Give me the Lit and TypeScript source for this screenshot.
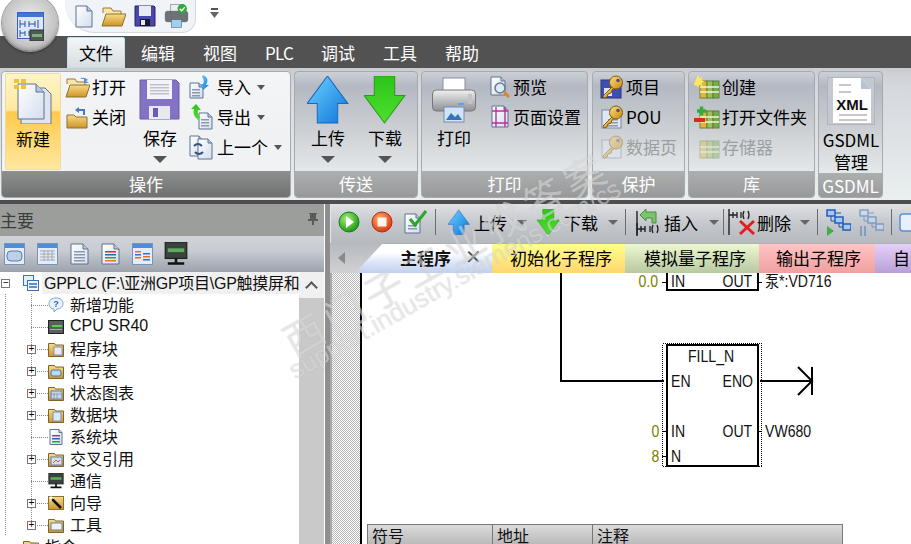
import { LitElement, html, svg, css, nothing } from 'lit';
import { customElement, property } from 'lit/decorators.js';

const CJK = css`"Noto Sans CJK SC", "Liberation Sans", sans-serif`;

const defs = svg`<defs>
  <linearGradient id="blue" x1="0" y1="0" x2="1" y2="1"><stop offset="0" stop-color="#6fd4ff"/><stop offset="1" stop-color="#0b74dc"/></linearGradient>
  <linearGradient id="green" x1="0" y1="0" x2="0" y2="1"><stop offset="0" stop-color="#2cc41c"/><stop offset="1" stop-color="#4fe02c"/></linearGradient>
  <linearGradient id="folder" x1="0" y1="0" x2="0" y2="1"><stop offset="0" stop-color="#f8dc88"/><stop offset="1" stop-color="#cc9428"/></linearGradient>
  <linearGradient id="page" x1="0" y1="0" x2="1" y2="1"><stop offset="0" stop-color="#fff"/><stop offset="1" stop-color="#d4deee"/></linearGradient>
  <linearGradient id="steel" x1="0" y1="0" x2="0" y2="1"><stop offset="0" stop-color="#f0f0f0"/><stop offset="1" stop-color="#8e9094"/></linearGradient>
  <linearGradient id="key" x1="0" y1="0" x2="1" y2="1"><stop offset="0" stop-color="#ffe27a"/><stop offset="1" stop-color="#c8860e"/></linearGradient>
  <radialGradient id="play" cx=".4" cy=".35" r=".7"><stop offset="0" stop-color="#a8f078"/><stop offset="1" stop-color="#14930f"/></radialGradient>
  <radialGradient id="stop" cx=".4" cy=".35" r=".7"><stop offset="0" stop-color="#ffb070"/><stop offset="1" stop-color="#d83208"/></radialGradient>
</defs>`;

const sheet = (x: number, y: number, w: number, h: number, fold = 5) =>
  svg`<path d="M${x} ${y}h${w - fold}l${fold} ${fold}v${h - fold}h${-w}z" fill="url(#page)" stroke="#5f7390"/>
      <path d="M${x + w - fold} ${y}v${fold}h${fold}" fill="#b8c8de" stroke="#5f7390"/>`;

const lines = (x: number, y: number, w: number, n: number, colors = ['#8a98ac']) =>
  Array.from({ length: n }, (_, i) =>
    svg`<rect x=${x} y=${y + i * 3} width=${w} height="1.5" fill=${colors[i % colors.length]}/>`);

const folderShape = svg`<path d="M.5 2.500h6l1 1.500h8v11.500H.5z" fill="url(#folder)" stroke="#7d6428"/>`;
const folderWith = (inner: unknown) => svg`${folderShape}${inner}`;
const folderOpen = svg`<path d="M2 8V3h8l2 3h8v3" fill="#f8e6a8" stroke="#9a7c30"/><path d="M1 21 5 9h20l-4 12z" fill="url(#folder)" stroke="#8d7030"/>`;
const keyShape = svg`<path d="M13 11 3 21l1 2 3-1 1-3 3-1 1-3 3-2z" fill="url(#key)" stroke="#7d5a10"/>
  <circle cx="16" cy="7.5" r="6.5" fill="url(#key)" stroke="#7d5a10"/><circle cx="18" cy="5.5" r="1.8" fill="#5b4a8a"/>`;
const books = svg`<rect x="6" y="6" width="7" height="17" fill="#d8b840" stroke="#8a7a28"/><rect x="13" y="6" width="6" height="17" fill="#98c060" stroke="#5f8030"/><rect x="19" y="6" width="6" height="17" fill="#78a850" stroke="#5f8030"/>
  <path d="M6 12h19M6 17h19" stroke="#f4f4d0" stroke-width="1.5"/>`;
const bigUp = svg`<path d="M20 0 40 27H30v19H10V27H0z" fill="url(#blue)" stroke="#1668c0"/>`;
const bigDown = svg`<path d="M10 0h20v19h10L20 46 0 19h10z" fill="url(#green)" stroke="#2a9a18"/>`;
const ladderGlyph = svg`<path d="M1 15v12M1 21h4M5 18v6M9 18v6M5 21h4" stroke="#222" stroke-width="1.4" fill="none"/>`;
const netNodes = (c: string, e: string) => svg`
  <rect x="2" y="1" width="8" height="6" fill=${c} stroke=${e} stroke-width="1.4"/><rect x="10" y="8" width="8" height="6" fill=${c} stroke=${e} stroke-width="1.4"/><rect x="18" y="15" width="8" height="6" fill=${c} stroke=${e} stroke-width="1.4"/>
  <path d="M6 7v5h4M14 14v4h4M10 4h6" stroke=${e} fill="none"/>`;
const win = (inner: unknown) => svg`<rect x=".5" y=".5" width="20" height="21" fill="#e6ecf6" stroke="#7c93b8"/><rect x="1" y="1" width="19" height="4" fill="#4d8edc"/>${inner}`;
const monitor = svg`<rect x="1" y="0" width="17" height="13" fill="#39423c" stroke="#222"/><rect x="3" y="5" width="13" height="3" fill="#5cae5c"/><path d="M9.5 13v3M3 17h13" stroke="#111" stroke-width="2"/>`;

// name: [width, height, viewBox width, viewBox height, body]
const ICONS: Record<string, [number, number, number, number, unknown]> = {
  newLarge: [40, 46, 40, 46, svg`
    <path d="M8 10h24l6 6v30H8z" fill="#dfe5ee" stroke="#66748a"/>${sheet(5, 6, 26, 35, 8)}
    <g fill="#f0c040"><rect x="1" y="1" width="5" height="4"/><rect x="8" y="1" width="5" height="4"/><rect x="1" y="7" width="5" height="4"/><rect x="8" y="7" width="5" height="4"/></g>`],
  openSmall: [25, 23, 25, 23, svg`${folderOpen}<path d="M15 3q4-3 8 1l-2 1 3 2-5 0 0-4z" fill="#5a90d0"/>`],
  closeSmall: [25, 23, 25, 23, svg`<path d="M2 9h7l2 2h11v11H2z" fill="url(#folder)" stroke="#8d7030"/><path d="M13 4h6v5" stroke="#4a7ab8" stroke-width="2" fill="none"/><path d="M10 4l4-3v6z" fill="#4a7ab8"/>`],
  saveLarge: [42, 42, 42, 42, svg`
    <path d="M1 1h36l3 3v36H1z" fill="#8472c4" stroke="#6a5ab0"/><rect x="8" y="1" width="25" height="19" fill="#f4f4f8"/>${lines(11, 5, 19, 4, ['#c0c0cc'])}
    <rect x="10" y="27" width="21" height="13" fill="#e8e8f0"/><rect x="14" y="29" width="5" height="9" fill="#6a5ab0"/>`],
  importSmall: [24, 24, 24, 24, svg`${sheet(1, 8, 13, 15, 4)}${lines(3, 14, 8, 3)}<path d="M14 0q7 3 3 10l3 0-6 5-3-6h3q2-4-1-7z" fill="url(#blue)"/>`],
  exportSmall: [24, 26, 24, 26, svg`${sheet(10, 9, 13, 16, 4)}${lines(12, 15, 8, 3)}<path d="M9 16Q3 11 5 5H2l5-5 5 6H9q-1 4 2 7z" fill="url(#green)"/>`],
  prevSmall: [24, 25, 24, 25, svg`${sheet(1, 1, 13, 20, 4)}${sheet(9, 4, 14, 20, 4)}<path d="M5 11q4-4 8 0M14 17q-4 4-8 0" stroke="#34507c" stroke-width="2" fill="none"/>`],
  upLarge: [42, 48, 41, 47, bigUp],
  downLarge: [42, 48, 41, 47, bigDown],
  printLarge: [44, 46, 44, 46, svg`
    <rect x="11" y="1" width="22" height="14" fill="#fff" stroke="#8a90a0"/><rect x=".5" y="13" width="43" height="21" rx="4" fill="url(#steel)" stroke="#777"/>
    <rect x="36" y="17" width="4" height="10" fill="#c4c4c4"/><rect x="12" y="30" width="20" height="15" fill="#cfe4f8" stroke="#7a8aa8"/><path d="M14 43l5-7 4 4 3-3 4 6z" fill="#3a72b8"/><rect x="26" y="26" width="6" height="2" fill="#5aa0f0"/>`],
  previewSmall: [22, 22, 22, 22, svg`${sheet(2, 1, 14, 18, 4)}<circle cx="11" cy="12" r="5" fill="#d8ecfa" stroke="#707880" stroke-width="1.5"/><path d="M15 16l5 5" stroke="#d88a20" stroke-width="3"/>`],
  setupSmall: [22, 24, 22, 24, svg`${sheet(3, 1, 16, 21, 4)}<path d="M7 2v20M16 2v20M3 6h16M3 18h16" stroke="#b8309c" stroke-width="1.4"/>`],
  keyDoc: [24, 24, 24, 24, svg`<rect x="1" y="5" width="20" height="18" fill="#3f4fb0" stroke="#2a3480"/><rect x="4" y="13" width="8" height="8" fill="#dce4f4"/>${keyShape}`],
  keySheet: [24, 24, 24, 24, svg`<rect x="2" y="5" width="19" height="18" fill="#e0e6f2" stroke="#7a88a8"/>${lines(8, 14, 10, 3)}${keyShape}`],
  keyOff: [24, 24, 24, 24, svg`<g opacity=".42"><rect x="2" y="5" width="19" height="18" fill="#e0e6f2" stroke="#7a88a8"/>${keyShape}</g>`],
  libNew: [26, 24, 26, 24, svg`${books}<path d="M4 0l1.5 3 3-1-1 3 3 1.5-3 1.5 1 3-3-1L4 13 2.500 10l-3 1 1-3" fill="#ffe860"/>`],
  libOpen: [26, 24, 26, 24, svg`${books}<path d="M3 6h9M7.500 1.500v9" stroke="#3aa838" stroke-width="3.5"/><path d="M0 15h11" stroke="#e02818" stroke-width="4"/>`],
  libOff: [26, 24, 26, 24, svg`<g opacity=".4">${books}</g>`],
  xml: [48, 48, 48, 48, svg`
    <rect x=".5" y=".5" width="47" height="47" fill="#c4c8d0" stroke="#b0b4bc"/><path d="M6 1h28l10 11v34H6z" fill="#fff"/><path d="M34 1v11h10z" fill="#b8c4d4"/>
    <path d="M12 8h12M12 15h12M12 38h28M12 43h28" stroke="#c8c8c8" stroke-width="2"/>
    <text x="25" y="33" font-family="Liberation Sans" font-weight="700" font-size="15" text-anchor="middle" fill="#111">XML</text>`],

  qDoc: [18, 23, 18, 23, sheet(1, 1, 16, 21, 5)],
  qOpen: [25, 23, 25, 23, folderOpen],
  qSave: [22, 22, 22, 22, svg`<path d="M1 1h19l1 1v19H1z" fill="#4a46b0" stroke="#24245c"/><rect x="5" y="1" width="12" height="10" fill="#e8eaf4"/><rect x="6" y="14" width="10" height="7" fill="#181830"/><rect x="7" y="15" width="4" height="5" fill="#e8e8f0"/>`],
  qPrint: [25, 24, 44, 46, svg`
    <rect x="11" y="1" width="22" height="18" fill="#eee" stroke="#666"/><rect x=".5" y="14" width="43" height="20" rx="4" fill="#6c7278" stroke="#444"/><rect x="12" y="30" width="20" height="15" fill="#9ed0f4" stroke="#555"/>
    <circle cx="33" cy="9" r="9" fill="#2fa83a"/><path d="M28 9l4 4 6-7" stroke="#fff" stroke-width="2.500" fill="none"/>`],
  qMore: [9, 11, 9, 11, svg`<path d="M1 1h7" stroke="#555" stroke-width="2"/><path d="M0 4h9L4.500 10z" fill="#666"/>`],

  app: [27, 29, 27, 29, svg`
    <rect x=".5" y=".5" width="26" height="26" fill="#dce8fa" stroke="#3c62b8"/><rect x="1" y="1" width="25" height="4" fill="#3c78d8"/>
    <path d="M3 8v8M3 12h5M8 9v6M12 9v6M12 12h6M18 9v6M21 8v8M3 18v7M3 21h5M8 19v5M12 19v5M12 21h6" stroke="#2a4ea8" fill="none"/>
    <rect x="13" y="18" width="14" height="11" fill="#4e5a52" stroke="#2f3530"/><rect x="15" y="22" width="10" height="3" fill="#7eb07e"/>`],

  pin: [12, 14, 12, 14, svg`<path d="M2 1h8v1H9v5h2v2H7v4H5V9H1V7h2V2H2z" fill="#5a5a5a"/>`],
  tRoot: [16, 16, 16, 16, svg`<rect x=".5" y=".5" width="10" height="10" fill="#e4eefa" stroke="#3a70c0"/><rect x="4.500" y="5.500" width="11" height="10" fill="#f4f8fe" stroke="#3a70c0"/><rect x="6" y="8" width="8" height="2" fill="#5a90d8"/><rect x="6" y="11" width="8" height="2" fill="#5a90d8"/>`],
  tBubble: [16, 16, 16, 16, svg`<path d="M8 1c4 0 7 2 7 5.500S12 12 9 12l-3 3v-3C3 12 1 10 1 6.500S4 1 8 1z" fill="#e8f4fc" stroke="#7ca8c8"/><text x="8" y="10" text-anchor="middle" font-size="9" font-family="Liberation Sans" font-weight="700" fill="#3a60c0">?</text>`],
  tCpu: [16, 14, 16, 14, svg`<rect x=".5" y=".5" width="15" height="13" fill="#5a5e5a" stroke="#222"/><rect x="4" y="5" width="10" height="2" fill="#54d054"/><rect x="2" y="9" width="12" height="1" fill="#aaa"/>`],
  tFolder1: [16, 16, 16, 16, folderWith(svg`<rect x="6" y="6" width="8" height="8" fill="#e8ecf4" stroke="#8894a8"/>`)],
  tFolder2: [16, 16, 16, 16, folderWith(svg`<rect x="3" y="7" width="10" height="6" rx="2" fill="#bcd8f4" stroke="#4a78b8"/>`)],
  tFolder3: [16, 16, 16, 16, folderWith(svg`<rect x="3" y="6" width="11" height="8" fill="#c8d4e8" stroke="#6880a8"/><path d="M3 9h11M6 9v5M9 9v5" stroke="#6880a8" stroke-width=".6"/>`)],
  tFolder4: [16, 16, 16, 16, folderWith(svg`<rect x="5" y="5" width="8" height="9" fill="#dce6f4" stroke="#7890b0"/>`)],
  tFolder5: [16, 16, 16, 16, folderWith(svg`<rect x="3" y="6" width="11" height="8" fill="#d0e0f4" stroke="#6880a8"/><path d="M5 12l3-3 2 2 2-2" stroke="#d06030" fill="none"/>`)],
  tFolder6: [16, 16, 16, 16, folderWith(svg`<rect x="3" y="6" width="11" height="7" fill="#eef2fa" stroke="#6880a8"/>`)],
  tDoc: [14, 16, 14, 16, svg`${sheet(1, .5, 12, 15, 3)}${lines(3, 6, 8, 3, ['#d03030', '#3060c0', '#30a040'])}`],
  tMonitor: [16, 16, 19, 19, monitor],
  tWand: [16, 16, 16, 16, svg`<rect x=".5" y="1.500" width="15" height="13" fill="url(#folder)" stroke="#8d7030"/><path d="M4 4l9 9" stroke="#111" stroke-width="2.500"/><path d="M3 1v5M1 3h5" stroke="#fff"/>`],

  pTag: [21, 22, 21, 22, win(svg`<rect x="3" y="8" width="15" height="10" rx="4" fill="#bcd0e8" stroke="#5a7aa8"/>`)],
  pTable: [21, 22, 21, 22, win(svg`<path d="M3 8h15M3 11h15M3 14h15M3 17h15M7 7v11M11 7v11M15 7v11" stroke="#a0aab8"/>`)],
  pDoc: [19, 22, 19, 22, svg`${sheet(1, 1, 17, 20, 5)}${lines(4, 8, 11, 4)}`],
  pDocColor: [19, 22, 19, 22, svg`${sheet(1, 1, 17, 20, 5)}${lines(4, 8, 11, 4, ['#d03030', '#3060c0', '#30a040', '#e08020'])}`],
  pWin: [21, 22, 21, 22, win(svg`${lines(3, 8, 6, 3, ['#e07020', '#3070d0'])}${lines(11, 10, 7, 3, ['#3070d0', '#e07020'])}`)],
  pMonitor: [24, 24, 19, 19, monitor],

  tbPlay: [22, 22, 22, 22, svg`<circle cx="11" cy="11" r="10" fill="url(#play)" stroke="#1a8014"/><path d="M8 5l8 6-8 6z" fill="#fff"/>`],
  tbStop: [22, 22, 22, 22, svg`<circle cx="11" cy="11" r="10" fill="url(#stop)" stroke="#b82808"/><rect x="6.500" y="6.500" width="9" height="9" fill="#fff" opacity=".9"/>`],
  tbCheck: [24, 24, 24, 24, svg`${sheet(1, 4, 15, 19, 4)}${lines(4, 15, 9, 2)}<path d="M6 9l5 6L22 1" stroke="#2ea62e" stroke-width="3" fill="none"/>`],
  tbUp: [22, 27, 41, 47, bigUp],
  tbDown: [23, 27, 41, 47, bigDown],
  tbInsert: [25, 28, 25, 28, svg`${ladderGlyph}<path d="M1 3v27" stroke="#222" stroke-width="1.400"/><path d="M14 15v-5h-6l0 3-6-6 6-6v3h10v11z" transform="translate(2 0)" fill="#7cc46c" stroke="#4a8c40"/><path d="M14 18v6M17 17q-2 4 0 8M21 17q2 4 0 8" stroke="#222" fill="none" stroke-width="1.300"/>`],
  tbDelete: [28, 28, 28, 28, svg`<path d="M1 1v26" stroke="#222" stroke-width="1.400"/><path d="M1 7h4M5 4v6M9 4v6M5 7h4M13 4v6M16 3q-2 4 0 8M20 3q2 4 0 8" stroke="#222" fill="none" stroke-width="1.300"/><path d="M12 13l14 13M26 13 12 26" stroke="#e02020" stroke-width="3"/>`],
  tbNet: [26, 27, 26, 27, svg`${netNodes('#a8c8f4', '#1458b8')}<path d="M2 17l7 5-7 5z" fill="#40b040"/>`],
  tbNetOff: [26, 27, 26, 27, svg`<g opacity=".6">${netNodes('#c8dcf8', '#4878b8')}<path d="M3 17v10M7 17v10" stroke="#5888c0" stroke-width="2"/></g>`],
  tbWin: [22, 22, 22, 22, svg`<rect x="1" y="3" width="20" height="17" rx="3" fill="#e8f0fc" stroke="#5a90d8" stroke-width="1.500"/>`],
};

@customElement('ui-icon')
class UiIcon extends LitElement {
  @property() name = '';

  static styles = css`
    :host {
      display: block;
      line-height: 0;
    }
  `;

  render() {
    const icon = ICONS[this.name];
    if (!icon) return nothing;
    const [w, h, vw, vh, body] = icon;
    return html`<svg width=${w} height=${h} viewBox="0 0 ${vw} ${vh}">${defs}${body}</svg>`;
  }
}

@customElement('ribbon-bar')
class RibbonBar extends LitElement {
  static styles = css`
    :host {
      display: block;
      font-family: ${CJK};
      font-size: 17px;
      color: #000;
    }
    .top {
      display: flex;
      align-items: flex-start;
      height: 36px;
      padding-left: 65px;
      background: #fff;
    }
    .quick {
      display: flex;
      align-items: center;
      gap: 8px;
      height: 33px;
      width: 131px;
      box-sizing: border-box;
      padding: 0 0 0 10px;
      background: #f0f3f7;
      border: 1px solid #d4d8de;
      border-width: 0 1px 1px 0;
      border-radius: 0 0 14px 30px;
    }
    .more {
      margin: 8px 0 0 14px;
    }
    .tabs {
      display: flex;
      gap: 4px;
      height: 32px;
      padding-left: 67px;
      background: #525252;
      color: #fff;
    }
    .tab {
      display: flex;
      align-items: center;
      padding: 0 12px;
      margin-top: 1px;
      border-radius: 3px 3px 0 0;
    }
    .tab.on {
      color: #000;
      background: linear-gradient(#f4f7f9, #d6dde0);
      box-shadow: inset 0 0 0 1px #bfe0e8;
    }
    .tab.latin {
      letter-spacing: -0.8px;
    }
    .ribbon {
      display: flex;
      gap: 3px;
      height: 132px;
      box-sizing: border-box;
      padding: 3px 0 0 1px;
      background: linear-gradient(#c9cbcf, #d4d7dc 16px, #e4e8ea 100px, #eaf0f0);
    }
    .group {
      display: flex;
      flex-direction: column;
      height: 127px;
      box-sizing: border-box;
      border: 1px solid #a6a9ad;
      border-radius: 4px;
      overflow: hidden;
      background: linear-gradient(#ccd0d6, #b4b8c2 14px, #c8ccd0 50px, #e4e8ea 100px);
    }
    .group.hot {
      background: linear-gradient(#f4f5f7, #f0f1f3 50%, #f2f4f4);
    }
    .op { width: 290px; }
    .send { width: 124px; }
    .print { width: 167px; }
    .protect { width: 93px; margin-left: 1px; }
    .lib { width: 127px; }
    .gsdml { width: 65px; }
    .body {
      flex: 1;
      display: flex;
      padding: 1px 0 0 4px;
    }
    .caption {
      height: 26px;
      line-height: 25px;
      text-align: center;
      color: #fff;
      background: linear-gradient(#adafaf, #97999a);
    }
    .hot .caption {
      background: linear-gradient(#8e9090, #6f7171);
    }
    .large {
      display: flex;
      flex-direction: column;
      align-items: center;
      width: 50px;
      flex: none;
    }
    .large .pic {
      display: flex;
      align-items: center;
      justify-content: center;
      height: 54px;
    }
    .large .text {
      height: 24px;
      line-height: 22px;
      white-space: nowrap;
    }
    .large .drop {
      width: 0;
      height: 0;
      margin-top: 5px;
      border: 7px solid transparent;
      border-top: 7px solid #555;
      border-bottom: 0;
    }
    .new {
      width: 56px;
      height: 97px;
      margin-left: -1px;
      box-sizing: border-box;
      border: 1px solid #f0dc98;
      border-radius: 2px;
      background: linear-gradient(#fff4c8, #ffe9a0 38%, #ffc94c 40%, #ffe8a0);
    }
    .col {
      display: flex;
      flex-direction: column;
      margin-top: -1px;
    }
    .small {
      display: flex;
      align-items: center;
      gap: 2px;
      height: 30px;
      white-space: nowrap;
    }
    .small span {
      margin-bottom: 2px;
    }
    .small .drop {
      width: 0;
      height: 0;
      margin-left: 1px;
      border: 4px solid transparent;
      border-top: 5px solid #555;
      border-bottom: 0;
    }
    .small .glyph {
      display: flex;
      justify-content: center;
      flex: none;
    }
    .off {
      color: #9a9fa2;
    }
    .up-btn { margin-left: 4px; }
    .down-btn { margin-left: 7px; }
    .col-open { margin-left: 4px; }
    .col-open .glyph { width: 25px; }
    .save { margin-left: 9px; }
    .col-file { margin-left: 4px; }
    .col-file .small { gap: 5px; }
    .col-file .glyph { width: 23px; }
    .prn { margin-left: 3px; }
    .col-prn { margin-left: 9px; }
    .col-prn .glyph { width: 23px; }
    .col-key { margin-left: 3px; }
    .col-key .glyph { width: 24px; }
    .col-lib { margin-left: 1px; }
    .gsdml-btn { width: 56px; }
    .gsdml-btn .pic { height: 56px; }
    .gsdml-btn .text { height: 22px; line-height: 22px; }
  `;

  private large(icon: string, label: string, drop = true, cls = '') {
    return html`<div class="large ${cls}">
      <div class="pic"><ui-icon name=${icon}></ui-icon></div>
      <div class="text">${label}</div>
      ${drop ? html`<div class="drop"></div>` : nothing}
    </div>`;
  }

  private small(icon: string, label: string, drop = false, off = false) {
    return html`<div class="small ${off ? 'off' : ''}">
      <div class="glyph"><ui-icon name=${icon}></ui-icon></div>
      <span>${label}</span>
      ${drop ? html`<i class="drop"></i>` : nothing}
    </div>`;
  }

  render() {
    return html`
      <div class="top">
        <div class="quick">
          <ui-icon name="qDoc"></ui-icon><ui-icon name="qOpen"></ui-icon>
          <ui-icon name="qSave"></ui-icon><ui-icon name="qPrint"></ui-icon>
        </div>
        <div class="more"><ui-icon name="qMore"></ui-icon></div>
      </div>
      <div class="tabs">
        <div class="tab on">文件</div>
        <div class="tab">编辑</div>
        <div class="tab">视图</div>
        <div class="tab latin">PLC</div>
        <div class="tab">调试</div>
        <div class="tab">工具</div>
        <div class="tab">帮助</div>
      </div>
      <div class="ribbon">
        <section class="group op hot">
          <div class="body">
            ${this.large('newLarge', '新建', false, 'new')}
            <div class="col col-open">
              ${this.small('openSmall', '打开')}
              ${this.small('closeSmall', '关闭')}
            </div>
            ${this.large('saveLarge', '保存', true, 'save')}
            <div class="col col-file">
              ${this.small('importSmall', '导入', true)}
              ${this.small('exportSmall', '导出', true)}
              ${this.small('prevSmall', '上一个', true)}
            </div>
          </div>
          <div class="caption">操作</div>
        </section>
        <section class="group send">
          <div class="body">
            ${this.large('upLarge', '上传', true, 'up-btn')}
            ${this.large('downLarge', '下载', true, 'down-btn')}
          </div>
          <div class="caption">传送</div>
        </section>
        <section class="group print">
          <div class="body">
            ${this.large('printLarge', '打印', false, 'prn')}
            <div class="col col-prn">
              ${this.small('previewSmall', '预览')}
              ${this.small('setupSmall', '页面设置')}
            </div>
          </div>
          <div class="caption">打印</div>
        </section>
        <section class="group protect">
          <div class="body">
            <div class="col col-key">
              ${this.small('keyDoc', '项目')}
              ${this.small('keySheet', 'POU')}
              ${this.small('keyOff', '数据页', false, true)}
            </div>
          </div>
          <div class="caption">保护</div>
        </section>
        <section class="group lib">
          <div class="body">
            <div class="col col-lib">
              ${this.small('libNew', '创建')}
              ${this.small('libOpen', '打开文件夹')}
              ${this.small('libOff', '存储器', false, true)}
            </div>
          </div>
          <div class="caption">库</div>
        </section>
        <section class="group gsdml">
          <div class="body">
            <div class="large gsdml-btn">
              <div class="pic"><ui-icon name="xml"></ui-icon></div>
              <div class="text">GSDML</div>
              <div class="text">管理</div>
            </div>
          </div>
          <div class="caption">GSDML</div>
        </section>
      </div>
    `;
  }
}

type TreeRow = { icon: string; label: string; plus?: boolean };

const TREE: TreeRow[] = [
  { icon: 'tBubble', label: '新增功能' },
  { icon: 'tCpu', label: 'CPU SR40' },
  { icon: 'tFolder1', label: '程序块', plus: true },
  { icon: 'tFolder2', label: '符号表', plus: true },
  { icon: 'tFolder3', label: '状态图表', plus: true },
  { icon: 'tFolder4', label: '数据块', plus: true },
  { icon: 'tDoc', label: '系统块' },
  { icon: 'tFolder5', label: '交叉引用', plus: true },
  { icon: 'tMonitor', label: '通信' },
  { icon: 'tWand', label: '向导', plus: true },
  { icon: 'tFolder6', label: '工具', plus: true },
];

const dots = 'repeating-linear-gradient(#8a8a8a 0 1px, transparent 1px 2px)';
const hdots = 'repeating-linear-gradient(to right, #8a8a8a 0 1px, transparent 1px 2px)';

@customElement('nav-panel')
class NavPanel extends LitElement {
  static styles = css`
    :host {
      display: flex;
      flex-direction: column;
      width: 324px;
      flex: none;
      font-family: "Liberation Sans", "Noto Sans CJK SC", sans-serif;
      font-size: 16px;
      background: #fff;
    }
    .head {
      display: flex;
      align-items: center;
      justify-content: space-between;
      height: 32px;
      padding: 0 5px 2px 0;
      box-sizing: border-box;
      background: #9c9e9c;
      color: #3c3c3c;
      font-family: ${CJK};
      font-size: 17px;
    }
    .tools {
      display: flex;
      align-items: center;
      height: 36px;
      padding-left: 4px;
      background: linear-gradient(#d0d3d7, #c8ccd2 40%, #9ca2ac);
    }
    .tools ui-icon { margin-right: 12px; }
    .tools ui-icon:last-child { margin: 0 0 0 -1px; }
    .view {
      flex: 1;
      display: flex;
      min-height: 0;
      overflow: hidden;
    }
    .tree {
      flex: 1;
      min-width: 0;
      overflow: hidden;
    }
    .row {
      display: flex;
      align-items: center;
      height: 22px;
      white-space: nowrap;
      background-repeat: no-repeat;
    }
    .row span {
      margin-bottom: 2px;
    }
    .root {
      padding-left: 1px;
      background-image: linear-gradient(#f0f0f0, #f0f0f0);
      background-size: 256px 100%;
      background-position: 42px 0;
      color: #111;
    }
    .root span {
      margin-left: 5px;
      letter-spacing: -0.25px;
    }
    .root .box { margin-right: 13px; }
    .child {
      padding-left: 27px;
    }
    .box {
      display: flex;
      flex: none;
      align-items: center;
      justify-content: center;
      width: 9px;
      height: 9px;
      box-sizing: border-box;
      border: 1px solid #777;
      background: #fff;
      color: #000;
      font: 10px/7px "Liberation Mono", monospace;
    }
    .gap { width: 9px; flex: none; }
    .child .box, .child .gap { margin-right: 12px; }
    .glyph { width: 16px; flex: none; display: flex; justify-content: center; }
    .label { margin-left: 6px; color: #111; }
    .folder { padding-left: 23px; }
    .bar {
      width: 25px;
      flex: none;
      background: #c9c9c9;
    }
    .up {
      display: flex;
      align-items: center;
      justify-content: center;
      height: 26px;
      background: #f0f0f0;
    }
    .up i {
      width: 7px;
      height: 7px;
      margin-top: 5px;
      border: solid #555;
      border-width: 2px 0 0 2px;
      transform: rotate(45deg);
    }
  `;

  private rowStyle(last: boolean) {
    const size = last ? '1px 50%' : '1px 100%';
    return `background-image:${dots},${dots},${hdots};background-size:1px 100%,${size},17px 1px;background-position:5px 0,31px 0,31px 50%`;
  }

  render() {
    return html`
      <div class="head"><span>主要</span><ui-icon name="pin"></ui-icon></div>
      <div class="tools">
        ${['pTag', 'pTable', 'pDoc', 'pDocColor', 'pWin', 'pMonitor'].map(n => html`<ui-icon name=${n}></ui-icon>`)}
      </div>
      <div class="view">
        <div class="tree">
          <div class="row root">
            <div class="box">−</div>
            <ui-icon name="tRoot"></ui-icon>
            <span>GPPLC (F:\\亚洲GP项目\\GP触摸屏和</span>
          </div>
          ${TREE.map((r, i) => html`
            <div class="row child" style=${this.rowStyle(i === TREE.length - 1)}>
              ${r.plus ? html`<div class="box">+</div>` : html`<div class="gap"></div>`}
              <div class="glyph"><ui-icon name=${r.icon}></ui-icon></div>
              <span class="label">${r.label}</span>
            </div>`)}
          <div class="row folder">
            <ui-icon name="tFolder6"></ui-icon>
            <span class="label">指令</span>
          </div>
        </div>
        <div class="bar"><div class="up"><i></i></div></div>
      </div>
    `;
  }
}

@customElement('ladder-editor')
class LadderEditor extends LitElement {
  static styles = css`
    :host {
      flex: 1;
      min-width: 0;
      display: flex;
      flex-direction: column;
      font-family: ${CJK};
      font-size: 17px;
      overflow: hidden;
    }
    .bar {
      display: flex;
      align-items: center;
      height: 39px;
      flex: none;
      box-sizing: border-box;
      padding: 0 0 3px 8px;
      background: linear-gradient(#dfe1e3, #c4c7cc 50%, #b6b9be);
      box-shadow: inset 1px 0 #e4e6e8;
      white-space: nowrap;
    }
    .bar .sep {
      width: 1px;
      height: 26px;
      background: #6a6e74;
      flex: none;
    }
    .bar .drop {
      width: 0;
      height: 0;
      flex: none;
      border: 5px solid transparent;
      border-top: 5px solid #666;
      border-bottom: 0;
    }
    .m12 { margin-left: 12px; }
    .m11 { margin-left: 11px; }
    .m9 { margin-left: 9px; }
    .m7 { margin-left: 7px; }
    .m4 { margin-left: 4px; }
    .m3 { margin-left: 3px; }
    .m1 { margin-left: 1px; }
    .m10 { margin-left: 10px; }
    .tabs {
      display: flex;
      align-items: stretch;
      height: 30px;
      flex: none;
      background: linear-gradient(#b6b9be, #d0d1d3);
      white-space: nowrap;
    }
    .nav {
      width: 25px;
      flex: none;
      display: flex;
      align-items: center;
      padding-left: 8px;
      box-sizing: border-box;
    }
    .nav i {
      width: 0;
      height: 0;
      border: solid transparent;
      border-width: 6px 7px 6px 0;
      border-right-color: #8a8a8a;
    }
    .tab {
      display: flex;
      flex: none;
      align-items: center;
      justify-content: center;
      padding-bottom: 3px;
      border-top: 1px solid #b0b0b0;
      box-sizing: border-box;
    }
    .main {
      width: 137px;
      clip-path: polygon(28px 0, 100% 0, 100% 100%, 0 100%);
      background: linear-gradient(#fff 30%, #dfe8f8 60%, #c0d0ee);
      font-weight: 700;
      justify-content: flex-start;
      padding-left: 45px;
      gap: 14px;
      color: #111;
    }
    .close { color: #555; font-weight: 400; font-size: 20px; font-family: "Liberation Sans", sans-serif; }
    .yellow { width: 133px; padding-left: 5px; background: linear-gradient(#ffff88, #ffd670); }
    .green { width: 134px; padding-left: 6px; background: linear-gradient(#ecf8d0, #b8c8a0); }
    .red { width: 116px; padding-left: 3px; background: linear-gradient(#ffc4c4, #f0a0a0); }
    .violet { width: 60px; justify-content: flex-start; padding-left: 18px; background: linear-gradient(#e4d0f8, #b8a0d8); }
    .canvas {
      flex: 1;
      display: flex;
      min-height: 0;
      background: #fff;
      overflow: hidden;
    }
    .gutter {
      width: 32px;
      flex: none;
      box-sizing: border-box;
      border-left: 2px solid #a8aaac;
      border-right: 2px solid #000;
      background: repeating-conic-gradient(#b8b8b8 0 25%, #fff 0 50%) 0 0 / 2px 2px;
    }
    svg { display: block; }
    text {
      font-family: "Liberation Sans", "Noto Sans CJK SC", sans-serif;
      font-size: 16px;
      fill: #111;
    }
    .k { fill: #808000; }
  `;

  // the reference font is tall and narrow, so the ladder labels are squeezed a little
  private t(x: number, y: number, s: string, cls = '') {
    return svg`<text class=${cls} transform="translate(${x} ${y}) scale(.88 1)">${s}</text>`;
  }

  render() {
    // drawing coordinates are page pixels, the svg starts at (362, 273)
    return html`
      <div class="bar">
        <ui-icon name="tbPlay"></ui-icon>
        <ui-icon class="m11" name="tbStop"></ui-icon>
        <ui-icon class="m11" name="tbCheck"></ui-icon>
        <div class="sep m7"></div>
        <ui-icon class="m12" name="tbUp"></ui-icon>
        <span class="m3">上传</span>
        <i class="drop m10"></i>
        <ui-icon class="m10" name="tbDown"></ui-icon>
        <span class="m4">下载</span>
        <i class="drop m10"></i>
        <div class="sep m7"></div>
        <ui-icon class="m10" name="tbInsert"></ui-icon>
        <span class="m3">插入</span>
        <i class="drop m11"></i>
        <div class="sep m4"></div>
        <ui-icon class="m4" name="tbDelete"></ui-icon>
        <span class="m1">删除</span>
        <i class="drop m9"></i>
        <div class="sep m7"></div>
        <ui-icon class="m7" name="tbNet"></ui-icon>
        <ui-icon class="m7" name="tbNetOff"></ui-icon>
        <div class="sep m7"></div>
        <ui-icon class="m7" name="tbWin"></ui-icon>
      </div>
      <div class="tabs">
        <div class="nav"><i></i></div>
        <div class="tab main">主程序<span class="close">✕</span></div>
        <div class="tab yellow">初始化子程序</div>
        <div class="tab green">模拟量子程序</div>
        <div class="tab red">输出子程序</div>
        <div class="tab violet">自动</div>
      </div>
      <div class="canvas">
        <div class="gutter"></div>
        <svg width="549" height="271" viewBox="362 273 549 271" shape-rendering="crispEdges">
          <defs><linearGradient id="hdr" x1="0" y1="0" x2="0" y2="1"><stop offset="0" stop-color="#dcdcdc"/><stop offset="1" stop-color="#a8a8a8"/></linearGradient></defs>
          <g fill="none" stroke="#000" stroke-width="2">
            <path d="M561 273V381H664"/>
            <path d="M667 273V290H758V273"/>
            <rect x="667" y="345" width="91" height="121"/>
            <path d="M760 381H811" />
            <path d="M812 367V395"/>
          </g>
          <path d="M798 367 812 381 798 395" fill="none" stroke="#000" stroke-width="2" shape-rendering="auto"/>
          <rect x="662.500" y="343.500" width="99" height="123" fill="none" stroke="#000" stroke-dasharray="1 1"/>
          <path d="M662 282h4M662 431h4M662 456h4M758 282h4M758 431h4" stroke="#000" stroke-width="1"/>
          ${this.t(671, 287, 'IN')}${this.t(722.5, 287, 'OUT')}
          ${this.t(638.5, 287, '0.0', 'k')}
          ${this.t(765, 287, '泵*:VD716')}
          ${this.t(688, 362, 'FILL_N')}
          ${this.t(671, 387, 'EN')}${this.t(722.5, 387, 'ENO')}
          ${this.t(671, 437, 'IN')}${this.t(722.5, 437, 'OUT')}
          ${this.t(671, 462, 'N')}
          ${this.t(651.5, 437, '0', 'k')}
          ${this.t(651.5, 462, '8', 'k')}
          ${this.t(765, 437, 'VW680')}
          <rect x="367.500" y="524.500" width="475" height="30" fill="url(#hdr)" stroke="#777"/>
          <path d="M492.500 524v20M592.500 524v20" stroke="#777"/>
          <text x="372" y="542">符号</text><text x="497" y="542">地址</text><text x="597" y="542">注释</text>
        </svg>
      </div>
    `;
  }
}

@customElement('app-root')
class AppRoot extends LitElement {
  static styles = css`
    :host {
      display: block;
      position: relative;
      width: 911px;
      height: 544px;
      overflow: hidden;
      background: #8e8e8e;
    }
    .main {
      display: flex;
      height: 344px;
      box-sizing: border-box;
      border-top: 4px solid #4e4e4e;
    }
    .split {
      width: 6px;
      flex: none;
      box-sizing: border-box;
      border-left: 1px solid #fff;
      background: #8e8e8e;
    }
    .orb {
      position: absolute;
      left: 2px;
      top: -5px;
      width: 56px;
      height: 56px;
      box-sizing: border-box;
      padding-top: 6px;
      display: flex;
      align-items: center;
      justify-content: center;
      border-radius: 50%;
      background: radial-gradient(circle at 50% 45%, #f0f0f0, #c4c4c4 62%, #8c8c8c 80%, #e8e8e8);
      box-shadow: 0 0 0 1px #9a9a9a, 0 2px 3px rgba(0, 0, 0, 0.4);
    }
    .mark {
      position: absolute;
      inset: 0;
      pointer-events: none;
      overflow: hidden;
    }
    .mark div {
      position: absolute;
      transform-origin: 0 100%;
      white-space: nowrap;
      color: rgba(255, 255, 255, 0.42);
      text-shadow: 0 0 1px rgba(130, 130, 130, 0.35);
    }
    .cn {
      left: 297px;
      top: 317px;
      font: 40px/46px ${CJK};
      letter-spacing: 6px;
      transform: rotate(-29.5deg);
    }
    .en {
      left: 298px;
      top: 355px;
      font: 26px/30px "Liberation Sans", sans-serif;
      transform: rotate(-29.5deg);
    }
  `;

  render() {
    return html`
      <ribbon-bar></ribbon-bar>
      <div class="main">
        <nav-panel></nav-panel>
        <div class="split"></div>
        <ladder-editor></ladder-editor>
      </div>
      <div class="orb"><ui-icon name="app"></ui-icon></div>
      <div class="mark">
        <div class="cn">西门子工业找答案</div>
        <div class="en">support.industry.siemens.com/cs</div>
      </div>
    `;
  }
}
